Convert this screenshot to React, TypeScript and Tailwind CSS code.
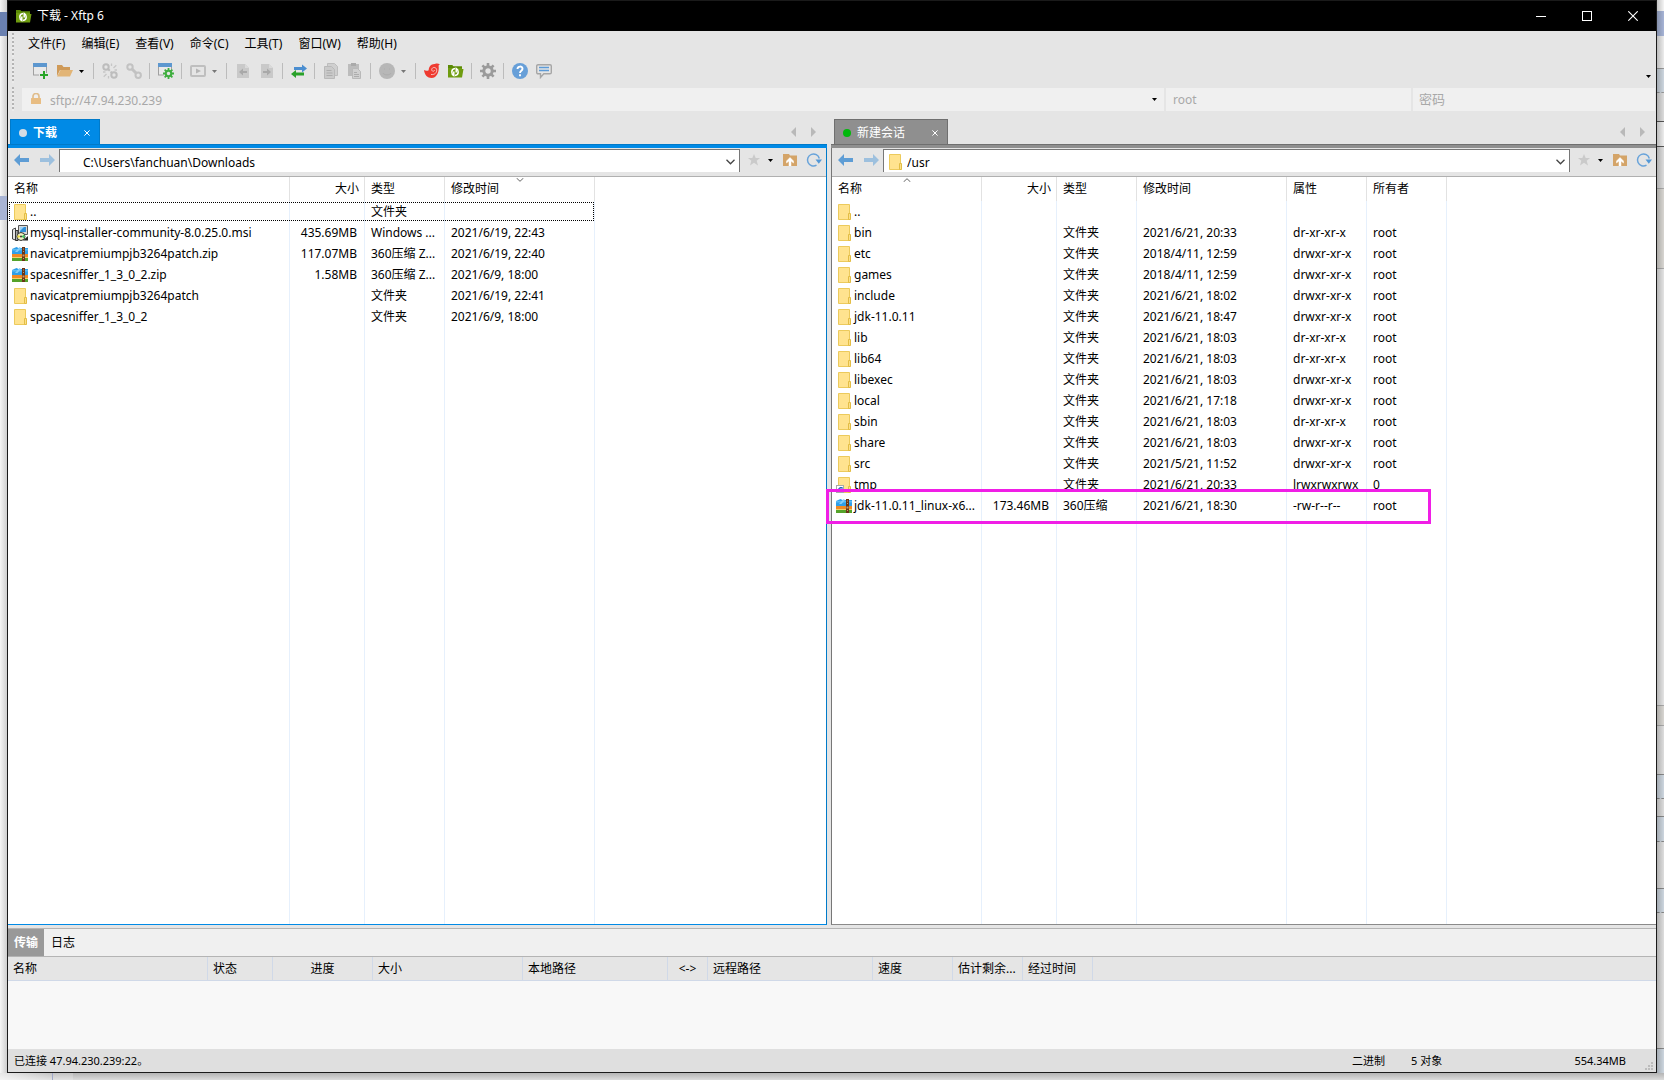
import React from "react";

type IconProps = { className?: string };

const Svg = ({ children, className = "size-4", box = "0 0 16 16" }: { children: React.ReactNode; className?: string; box?: string }) => (
  <svg viewBox={box} className={`block shrink-0 ${className}`} fill="none" aria-hidden="true">
    {children}
  </svg>
);

const XftpIcon = ({ className }: IconProps) => (
  <Svg className={className}>
    <path d="M0 2h4l1.500 1.500H14V6h1.500L14 14.500H0z" fill="#6f9c10" />
    <path d="M0 2h4l1.500 1.500H14V5H0z" fill="#5b8a06" />
    <path d="M7 5.500C4.800 5.700 3.800 7.200 3.800 9c0 1.700.8 2.900 2 3.500V8.500" stroke="#fff" strokeWidth="1.500" />
    <path d="M7 12.500c2.200-.2 3.200-1.700 3.200-3.500 0-1.700-.8-2.900-2-3.500v4" stroke="#fff" strokeWidth="1.500" />
  </Svg>
);

const NewWindowIcon = () => (
  <Svg>
    <rect x="0.500" y="1" width="13" height="11" fill="#e9e9e9" stroke="#a0a0a0" />
    <rect x="0" y="0" width="14" height="4" fill="#5c97cf" />
    <path d="M6 12h9.500M11 7.500v8" stroke="#e5e5e5" strokeWidth="4" />
    <path d="M7 12h8M11 8v8" stroke="#27a527" strokeWidth="2" />
  </Svg>
);
const OpenFolderIcon = () => (
  <Svg>
    <path d="M0 2h5l1.500 2H13v3H3L0 13z" fill="#cf9a58" />
    <path d="M3.500 7H16l-3 6.500H0z" fill="#e2b577" />
  </Svg>
);
const UnlinkIcon = () => (
  <Svg>
    <g stroke="#bdbdbd" strokeWidth="2">
      <circle cx="4" cy="4" r="2.700" />
      <circle cx="12" cy="12" r="2.700" />
      <path d="M6 6l1.800 1.800M10 10L8.600 8.600" />
    </g>
    <path d="M9.500 3V0.500M11.500 5l2.800-2.800M12.500 7H15M3.500 9H1M4.500 11l-2.800 2.800M6.500 13v2.500" stroke="#c6c6c6" strokeWidth="1.300" />
  </Svg>
);
const LinkIcon = () => (
  <Svg>
    <g stroke="#c2c2c2" strokeWidth="2">
      <circle cx="4" cy="4" r="2.700" />
      <circle cx="12.200" cy="12.200" r="2.700" />
      <path d="M5.500 5.500l5 5" strokeWidth="3" />
    </g>
  </Svg>
);
const gearPath = "M8 0v16M0 8h16M2.400 2.400l11.200 11.200M13.600 2.400L2.400 13.600";
const WindowGearIcon = () => (
  <Svg>
    <rect x="0.500" y="1" width="13" height="11" fill="#e9e9e9" stroke="#a0a0a0" />
    <rect x="0" y="0" width="14" height="4" fill="#5c97cf" />
    <circle cx="10.500" cy="10.500" r="5" fill="#e5e5e5" />
    <g transform="translate(5 5) scale(0.69)">
      <path d={gearPath} stroke="#3fae3f" strokeWidth="2.600" />
      <circle cx="8" cy="8" r="4" fill="#e5e5e5" stroke="#3fae3f" strokeWidth="3" />
    </g>
  </Svg>
);
const PlayIcon = () => (
  <Svg>
    <rect x="1" y="3" width="14" height="10" rx="1" stroke="#bfbfbf" strokeWidth="2" />
    <path d="M6 5.500v5L11 8z" fill="#b5b5b5" />
  </Svg>
);
const DocIcon = ({ back }: { back?: boolean }) => (
  <Svg>
    <path d="M2 1h8l4 4v10H2z" fill="#c9c9c9" />
    <path d="M10 1v4h4z" fill="#dadada" />
    <path d={back ? "M4 9l4-3.500v2.500h4v2H8v2.500z" : "M12 9L8 5.500v2.500H4v2h4v2.500z"} fill="#a9a9a9" />
  </Svg>
);
const SwapIcon = () => (
  <Svg>
    <path d="M16 5.500L11 1.500v2.500H3v3h8v2.500z" fill="#4b8ed0" />
    <path d="M0 11l5-4v2.500h8v3H5V15z" fill="#29a129" />
  </Svg>
);
const CopyIcon = () => (
  <Svg>
    <path d="M4.500 0.500h7l3 3v9h-10z" fill="#cfcfcf" stroke="#bdbdbd" />
    <path d="M1.500 3.500h7l3 3v9h-10z" fill="#cacaca" stroke="#b9b9b9" />
    <path d="M3.500 7.500h5M3.500 10h6M3.500 12.500h6" stroke="#adadad" />
  </Svg>
);
const PasteIcon = () => (
  <Svg>
    <path d="M1 1h11v12H1z" fill="#bcbcbc" />
    <path d="M4 0h5v3H4z" fill="#aaa" />
    <path d="M5.500 5.500h5l3 3v7h-8z" fill="#d0d0d0" stroke="#b9b9b9" />
    <path d="M7 9.500h3M7 11.500h5M7 13.500h5" stroke="#adadad" />
  </Svg>
);
const CircleIcon = () => (
  <Svg>
    <circle cx="8" cy="8" r="8" fill="#b7b7b7" />
    <path d="M4 10c1 2.500 7 2.500 8 0M5.500 5.500v1M10.500 5.500v1" stroke="#acacac" />
  </Svg>
);
const XshellIcon = () => (
  <Svg>
    <path d="M0 7c1.500 1 3.200 1 4.700.2C4.800 3.500 7.500.5 11 1c1.200-.6 3.400-.6 5 .4-1 .3-1.400.8-1.400 1.500C15.500 8 13 15 7.500 15 3.500 15 .5 12 0 7z" fill="#ef3a30" />
    <path d="M7 11.500c3.500.6 6-1.800 5.700-4.700-.3-3-4.700-3.200-5-.2-.1 2 2.700 2.300 2.800.4" stroke="#f6cfcc" strokeWidth="0.900" />
  </Svg>
);
const GearIcon = () => (
  <Svg>
    <path d={gearPath} stroke="#9b9b9b" strokeWidth="2.600" />
    <circle cx="8" cy="8" r="4.200" fill="#e5e5e5" stroke="#9b9b9b" strokeWidth="3" />
  </Svg>
);
const HelpIcon = () => (
  <Svg>
    <circle cx="8" cy="8" r="8" fill="#679fd8" />
    <path d="M5.500 6c0-3.200 5-3.200 5-.2C10.500 7.800 8 7.700 8 10M8 11.300v2" stroke="#fff" strokeWidth="1.900" />
  </Svg>
);
const ChatIcon = () => (
  <Svg>
    <path d="M2 1.700h12a1.300 1.300 0 0 1 1.300 1.300v6.500a1.300 1.300 0 0 1-1.300 1.300H7.800L4.500 14.500v-3.700H2A1.300 1.300 0 0 1 .7 9.500V3A1.300 1.300 0 0 1 2 1.700z" stroke="#a6a6a6" strokeWidth="1.400" />
    <path d="M3 4.500h10M3 7.500h10" stroke="#5c9bd8" strokeWidth="1.600" />
  </Svg>
);
const LockIcon = () => (
  <Svg className="h-3 w-[10px]" box="0 0 10 12">
    <path d="M2 6V3.500a3 3 0 0 1 6 0V6" stroke="#e0bd8c" strokeWidth="1.700" />
    <rect y="5" width="10" height="6" rx="0.500" fill="#e8bd83" />
  </Svg>
);
const Caret = ({ className = "text-black" }: IconProps) => (
  <Svg className={`h-[3px] w-[5px] ${className}`} box="0 0 5 3">
    <path d="M0 0h5L2.500 3z" fill="currentColor" />
  </Svg>
);
const Chevron = () => (
  <Svg className="h-[6px] w-[9px]" box="0 0 9 6">
    <path d="M.5.800l4 4 4-4" stroke="#444" strokeWidth="1.300" />
  </Svg>
);
const ArrowIcon = ({ forward }: { forward?: boolean }) => (
  <Svg>
    <path
      d={forward ? "M16 8L10 2v4H1v4h9v4z" : "M0 8l6-6v4h9v4H6v4z"}
      fill={forward ? "#9dc0de" : "#5e9dd5"}
    />
  </Svg>
);
const StarIcon = () => (
  <Svg className="size-3" box="0 0 12 12">
    <path d="M6 0l1.700 4H12L8.700 6.800 10 11.500 6 8.800 2 11.500l1.300-4.700L0 4h4.300z" fill="#cacaca" />
  </Svg>
);
const UpFolderIcon = () => (
  <Svg className="h-3 w-[14px]" box="0 0 14 12">
    <path d="M0 0h6l1 1.500h7V12H0z" fill="#d4a468" />
    <path d="M7 3.500L3.500 7v2L6 7v5h2V7l2.500 2V7z" fill="#fff" stroke="#fff" strokeWidth="0.500" />
  </Svg>
);
const RefreshIcon = () => (
  <Svg>
    <path d="M10.500 13.200A6 6 0 1 1 13.300 6.500" stroke="#68a3da" strokeWidth="1.500" />
    <path d="M9.500 7.500H16l-3.200 4.300z" fill="#5498d6" />
  </Svg>
);
const Triangle = ({ right }: { right?: boolean }) => (
  <Svg className="h-[10px] w-[5px]" box="0 0 5 10">
    <path d={right ? "M0 0v10l5-5z" : "M5 0v10L0 5z"} fill="#b9b9b9" />
  </Svg>
);

const FolderIcon = ({ link }: { link?: boolean }) => (
  <Svg>
    <path d="M2.500.5h11v9.500l.5 5.500H2.500z" fill="#ffe38f" stroke="#ecca5c" />
    <path d="M12.500 9.500h2v6h-2z" fill="#fbe08a" stroke="#e3bd45" />
    {link && (
      <>
        <rect x="0.500" y="8.500" width="7" height="7" fill="#fff" stroke="#a9a9a9" />
        <path d="M2 14c0-2 1-3 3-3M3.500 10.500H6V13" stroke="#2767b8" strokeWidth="1.200" />
      </>
    )}
  </Svg>
);
const ZipIcon = () => (
  <Svg>
    <path d="M0 3l4.500-2 2 1H16v6H0z" fill="#2f9fe9" />
    <path d="M0 3h16v1.500H0z" fill="#5cbcf5" />
    <path d="M3 6L7.500 1 9 2 5.500 6z" fill="#86cffa" />
    <path d="M0 8h16v3.500H0z" fill="#f08a24" />
    <path d="M0 11h16v1H0z" fill="#f6cf6a" />
    <path d="M0 12h16v3H0z" fill="#55a32b" />
    <path d="M10 1h3v14h-3z" fill="#6a3516" />
    <path d="M11 2.500h1v1h-1zM11 5h1v1h-1zM10.500 8.500h2v2h-2zM11 12h1v1h-1z" fill="#c79a6b" />
  </Svg>
);
const MsiIcon = () => (
  <Svg>
    <path d="M6.500.5h9v9h-9z" fill="#d8d8d8" stroke="#555" />
    <path d="M8 2h6v5H8z" fill="#2e8ed8" />
    <path d="M8 2h4L8 6z" fill="#9bd2f7" />
    <path d="M.5 4.500l3-1.500v12l-3-1z" fill="#e4e4e4" stroke="#444" />
    <path d="M3.500 5.500h2.500v10H3.500z" fill="#aaa" stroke="#333" />
    <circle cx="9" cy="11.500" r="4" fill="#f1f1c4" stroke="#333" />
    <path d="M9 11.500l3.500-2v4z" fill="#3fc15c" />
    <path d="M9 11.500L5.500 10v3z" fill="#e9d93d" />
    <circle cx="9" cy="11.500" r="1" fill="#333" />
    <path d="M11 15.500h5V11z" fill="#222" />
  </Svg>
);

type Kind = "folder" | "link" | "zip" | "msi";
type Row = { kind: Kind; cells: string[]; focused?: boolean; marked?: boolean };

const FileIcon = ({ kind }: { kind: Kind }) => {
  if (kind === "zip") return <ZipIcon />;
  if (kind === "msi") return <MsiIcon />;
  return <FolderIcon link={kind === "link"} />;
};

const localRows: Row[] = [
  { kind: "folder", cells: ["..", "", "文件夹", ""], focused: true },
  { kind: "msi", cells: ["mysql-installer-community-8.0.25.0.msi", "435.69MB", "Windows ...", "2021/6/19, 22:43"] },
  { kind: "zip", cells: ["navicatpremiumpjb3264patch.zip", "117.07MB", "360压缩 Z...", "2021/6/19, 22:40"] },
  { kind: "zip", cells: ["spacesniffer_1_3_0_2.zip", "1.58MB", "360压缩 Z...", "2021/6/9, 18:00"] },
  { kind: "folder", cells: ["navicatpremiumpjb3264patch", "", "文件夹", "2021/6/19, 22:41"] },
  { kind: "folder", cells: ["spacesniffer_1_3_0_2", "", "文件夹", "2021/6/9, 18:00"] },
];

const dir = (name: string, time: string, mode: string): Row => ({ kind: "folder", cells: [name, "", "文件夹", time, mode, "root"] });

const remoteRows: Row[] = [
  { kind: "folder", cells: ["..", "", "", "", "", ""] },
  dir("bin", "2021/6/21, 20:33", "dr-xr-xr-x"),
  dir("etc", "2018/4/11, 12:59", "drwxr-xr-x"),
  dir("games", "2018/4/11, 12:59", "drwxr-xr-x"),
  dir("include", "2021/6/21, 18:02", "drwxr-xr-x"),
  dir("jdk-11.0.11", "2021/6/21, 18:47", "drwxr-xr-x"),
  dir("lib", "2021/6/21, 18:03", "dr-xr-xr-x"),
  dir("lib64", "2021/6/21, 18:03", "dr-xr-xr-x"),
  dir("libexec", "2021/6/21, 18:03", "drwxr-xr-x"),
  dir("local", "2021/6/21, 17:18", "drwxr-xr-x"),
  dir("sbin", "2021/6/21, 18:03", "dr-xr-xr-x"),
  dir("share", "2021/6/21, 18:03", "drwxr-xr-x"),
  dir("src", "2021/5/21, 11:52", "drwxr-xr-x"),
  { kind: "link", cells: ["tmp", "", "文件夹", "2021/6/21, 20:33", "lrwxrwxrwx", "0"] },
  { kind: "zip", cells: ["jdk-11.0.11_linux-x6...", "173.46MB", "360压缩", "2021/6/21, 18:30", "-rw-r--r--", "root"], marked: true },
];

type Column = { label: string; width: string; sort?: "asc" | "desc" };

const localColumns: Column[] = [
  { label: "名称", width: "w-[282px]" },
  { label: "大小", width: "w-[75px]" },
  { label: "类型", width: "w-[80px]" },
  { label: "修改时间", width: "w-[150px]", sort: "desc" },
];
const remoteColumns: Column[] = [
  { label: "名称", width: "w-[150px]", sort: "asc" },
  { label: "大小", width: "w-[75px]" },
  { label: "类型", width: "w-[80px]" },
  { label: "修改时间", width: "w-[150px]" },
  { label: "属性", width: "w-[80px]" },
  { label: "所有者", width: "w-[80px]" },
];

const FileTable = ({ columns, rows, label }: { columns: Column[]; rows: Row[]; label: string }) => (
  <table aria-label={label} className="h-full w-full table-fixed border-separate border-spacing-0 bg-white">
    <colgroup>
      {columns.map((c) => (
        <col key={c.label} className={c.width} />
      ))}
      <col />
    </colgroup>
    <thead>
      <tr className="h-6">
        {columns.map((c, i) => (
          <th
            key={c.label}
            scope="col"
            className={`relative border-r border-[#e2e2e2] p-0 font-normal ${i === 1 ? "pr-[5px] text-right" : "pl-[6px] text-left"}`}
          >
            {c.label}
            {c.sort && (
              <svg viewBox="0 0 8 4" fill="none" aria-hidden="true" className="absolute top-px left-1/2 h-1 w-2 -translate-x-1/2">
                <path d={c.sort === "asc" ? "M.5 4L4 .7 7.500 4" : "M.5 0L4 3.300 7.500 0"} stroke="#666" />
              </svg>
            )}
          </th>
        ))}
        <td className="p-0" />
      </tr>
    </thead>
    <tbody>
      {rows.map((row) => (
        <tr key={row.cells[0]} className="relative h-[21px]">
          {row.cells.map((text, i) => (
            <td
              key={columns[i].label}
              className={`border-r border-[#e6f0fc] p-0 whitespace-nowrap ${i === 1 ? "pr-[7px] text-right" : i === 0 ? "pl-1" : "pl-[6px]"}`}
            >
              {i === 0 ? (
                <span className="flex items-center gap-0.5">
                  <FileIcon kind={row.kind} />
                  {text}
                </span>
              ) : (
                text
              )}
              {i === 0 && row.focused && <span className="absolute top-px left-px h-[19px] w-[585px] border border-dotted border-black" />}
              {i === 0 && row.marked && (
                <span className="absolute -top-[6px] -left-[6px] h-[35px] w-[605px] border-[3px] border-[#f01ee6]" />
              )}
            </td>
          ))}
          <td className="p-0" />
        </tr>
      ))}
      <tr>
        {columns.map((c) => (
          <td key={c.label} className="border-r border-[#e6f0fc] p-0" />
        ))}
        <td className="p-0" />
      </tr>
    </tbody>
  </table>
);

type PaneProps = {
  active?: boolean;
  title: string;
  path: string;
  columns: Column[];
  rows: Row[];
};

const Pane = ({ active, title, path, columns, rows }: PaneProps) => (
  <section className="flex min-w-0 flex-col">
    <div className={`flex h-8 items-end justify-between ${active ? "pl-0.5" : "pl-[3px]"}`}>
      <div
        className={`flex h-[25px] items-center border border-b-0 pt-0.5 pr-[9px] pl-2 text-white ${
          active ? "w-[90px] border-[#007ac9] bg-[#008ae6]" : "w-[114px] border-[#6f6f6f] bg-[#8f8f8f]"
        }`}
      >
        <span className={`mr-[6px] size-2 rounded-full ${active ? "bg-[#d4dce4]" : "bg-[#00b80c]"}`} />
        <button type="button" className={`flex-1 text-left ${active ? "font-bold" : ""}`}>
          {title}
        </button>
        <button type="button" aria-label="关闭标签">
          <Svg className="size-[6px]" box="0 0 6 6">
            <path d="M.4.4l5.200 5.200M5.600.4L.4 5.600" stroke="#fff" />
          </Svg>
        </button>
      </div>
      <div className="mr-[11px] flex h-6 items-center gap-[15px]">
        <button type="button" aria-label="上一个标签"><Triangle /></button>
        <button type="button" aria-label="下一个标签"><Triangle right /></button>
      </div>
    </div>
    <div className={`h-1 border-t ${active ? "border-[#007ac9] bg-[#008ae6]" : "border-[#6f6f6f] bg-[#8f8f8f]"}`} />
    <div
      className={`flex min-h-0 flex-1 flex-col border-b ${
        active ? "border-r border-r-[#007ac9] border-b-[#008ae6]" : "border-l border-l-[#777] border-b-[#8a8a8a]"
      }`}
    >
      <div className="flex h-[29px] shrink-0 items-center border-b border-[#b0b0b0] pr-1 pb-1 pl-[6px]">
        <button type="button" aria-label="后退"><ArrowIcon /></button>
        <button type="button" aria-label="前进" className="ml-[9px]"><ArrowIcon forward /></button>
        <div className="mt-px ml-1 flex h-[23px] min-w-0 flex-1 items-center border border-b-0 border-[#777] bg-white pt-0.5 pr-1 pl-[3px]">
          <span className="w-5 shrink-0">{!active && <FolderIcon />}</span>
          <input aria-label="路径" defaultValue={path} className="min-w-0 flex-1 bg-transparent pt-0.5 outline-none" />
          <button type="button" aria-label="路径列表"><Chevron /></button>
        </div>
        <button type="button" aria-label="收藏夹" className="ml-2 flex items-center gap-2">
          <StarIcon />
          <Caret />
        </button>
        <button type="button" aria-label="上级目录" className="ml-[10px]"><UpFolderIcon /></button>
        <button type="button" aria-label="刷新" className="ml-[9px]"><RefreshIcon /></button>
      </div>
      <div className="min-h-0 flex-1">
        <FileTable columns={columns} rows={rows} label={title} />
      </div>
    </div>
  </section>
);

const menus = ["文件(F)", "编辑(E)", "查看(V)", "命令(C)", "工具(T)", "窗口(W)", "帮助(H)"];

const tools: { name: string; icon?: React.ReactNode; caret?: string; sep?: boolean }[] = [
  { name: "新建", icon: <NewWindowIcon /> },
  { name: "打开", icon: <OpenFolderIcon />, caret: "text-black" },
  { name: "s1", sep: true },
  { name: "断开", icon: <UnlinkIcon /> },
  { name: "重新连接", icon: <LinkIcon /> },
  { name: "s2", sep: true },
  { name: "属性", icon: <WindowGearIcon /> },
  { name: "s3", sep: true },
  { name: "执行", icon: <PlayIcon />, caret: "text-[#777]" },
  { name: "s4", sep: true },
  { name: "传输到左边", icon: <DocIcon back /> },
  { name: "传输到右边", icon: <DocIcon /> },
  { name: "s5", sep: true },
  { name: "同步", icon: <SwapIcon /> },
  { name: "s6", sep: true },
  { name: "复制", icon: <CopyIcon /> },
  { name: "粘贴", icon: <PasteIcon /> },
  { name: "s7", sep: true },
  { name: "编码", icon: <CircleIcon />, caret: "text-[#777]" },
  { name: "s8", sep: true },
  { name: "Xshell", icon: <XshellIcon /> },
  { name: "Xftp", icon: <XftpIcon /> },
  { name: "s9", sep: true },
  { name: "选项", icon: <GearIcon /> },
  { name: "s10", sep: true },
  { name: "帮助", icon: <HelpIcon /> },
  { name: "反馈", icon: <ChatIcon /> },
];

const transferColumns = [
  { label: "名称", width: "w-[200px]" },
  { label: "状态", width: "w-[65px]" },
  { label: "进度", width: "w-[100px]" },
  { label: "大小", width: "w-[150px]" },
  { label: "本地路径", width: "w-[145px]" },
  { label: "<->", width: "w-[40px]" },
  { label: "远程路径", width: "w-[165px]" },
  { label: "速度", width: "w-[80px]" },
  { label: "估计剩余...", width: "w-[70px]" },
  { label: "经过时间", width: "w-[70px]" },
];

const Grip = ({ className }: { className: string }) => (
  <span className={`w-0.5 bg-[repeating-linear-gradient(#b4b4b4_0_2px,#ececec_2px_4px)] ${className}`} />
);

/* Slices of the document that stays visible behind the window's right edge. */
const backdropSlices = [
  "h-[11px] bg-[#f4f4f4]",
  "h-[25px] bg-[#a6b4d6]",
  "h-[33px] border-b border-[#999] bg-[#ececec]",
  "h-[24px] border-b border-dashed border-[#999] bg-[#cdd6df]",
  "h-[29px] border-b border-[#555] bg-[#dcdcdc]",
  "h-[25px] border-b border-[#555] bg-[#ececec]",
  "h-[42px] border-b border-[#aaa] bg-[#dcdcdc]",
  "h-[80px] border-b border-[#aaa] bg-[#d8d6d2]",
  "h-[437px] border-b border-[#aaa] bg-[#e4e4e4]",
  "h-[20px] border-b border-[#aaa] bg-[#d8d6d2]",
  "h-[49px] border-b border-[#888] bg-[#dedede]",
  "h-[24px] border-b border-dashed border-[#888] bg-[#cdd6df]",
  "h-[18px] border-b border-[#888] bg-[#dcdcdc]",
  "h-[25px] border-b border-dashed border-[#888] bg-[#cdd6df]",
  "h-[47px] border-b border-[#888] bg-[#dedede]",
  "h-[24px] border-b border-dashed border-[#888] bg-[#cdd6df]",
  "h-[136px] border-b border-[#888] bg-[#dedede]",
  "h-[24px] bg-[#cdd6df]",
];

export default function App() {
  return (
    <div className="grid h-screen w-full grid-cols-[7px_1fr_7px] grid-rows-[1fr_7px] overflow-hidden bg-[#d4d4d4] font-['Noto_Sans','Noto_Sans_CJK_SC',sans-serif] text-[12px] leading-4 text-black">
      <div className="flex flex-col bg-linear-to-r from-[#f6f6f6] to-[#cfcfcf]">
        <div className="mt-3 h-6 bg-[#6a80b0]" />
        <div className="mt-[160px] h-6 bg-[#a8b4d4]" />
      </div>

      <main className="flex min-w-0 flex-col border border-[#1a1a1a] bg-[#e5e5e5]">
        <header className="flex h-[30px] shrink-0 items-center bg-black text-white">
          <XftpIcon className="ml-2 size-4" />
          <h1 className="ml-[5px] flex-1">下载 - Xftp 6</h1>
          <button type="button" aria-label="最小化" className="flex h-full w-[46px] items-center justify-center">
            <span className="h-px w-[10px] bg-white" />
          </button>
          <button type="button" aria-label="最大化" className="flex h-full w-[46px] items-center justify-center">
            <span className="size-[10px] border border-white" />
          </button>
          <button type="button" aria-label="关闭" className="flex h-full w-[46px] items-center justify-center">
            <Svg className="size-[10px]" box="0 0 10 10">
              <path d="M.3.3l9.400 9.400M9.700.3L.3 9.700" stroke="#fff" strokeWidth="1.100" />
            </Svg>
          </button>
        </header>

        <nav aria-label="菜单" className="flex h-[26px] shrink-0 items-center pl-1">
          <Grip className="mt-0.5 h-6" />
          <div className="ml-[6px] flex">
            {menus.map((m) => (
              <button key={m} type="button" className="px-2">
                {m}
              </button>
            ))}
          </div>
        </nav>

        <div role="toolbar" aria-label="工具栏" className="flex h-[29px] shrink-0 items-center pb-px pl-1">
          <Grip className="mr-[19px] h-6" />
          {tools.map((t) =>
            t.sep ? (
              <span key={t.name} className="mr-2 -ml-px h-4 w-px bg-[#bcbcbc]" />
            ) : (
              <button key={t.name} type="button" aria-label={t.name} className={`flex items-center ${t.caret ? "mr-[10px] gap-[6px]" : "mr-2"}`}>
                {t.icon}
                {t.caret && <Caret className={t.caret} />}
              </button>
            ),
          )}
          <button type="button" aria-label="更多" className="mt-[10px] mr-[5px] ml-auto">
            <Caret />
          </button>
        </div>

        <div className="flex h-[26px] shrink-0 items-center pr-px pl-1 text-[#a8a8a8]">
          <Grip className="h-6" />
          <div className="ml-2 flex h-[23px] min-w-0 flex-1 items-center bg-[#f0f0f0] pl-[9px]">
            <LockIcon />
            <input aria-label="地址" defaultValue="sftp://47.94.230.239" className="ml-[9px] min-w-0 flex-1 bg-transparent pt-1 outline-none" />
            <button type="button" aria-label="地址列表" className="mr-[7px]">
              <Caret />
            </button>
          </div>
          <input aria-label="用户名" placeholder="root" className="ml-0.5 h-[23px] w-[245px] bg-[#f0f0f0] px-[7px] outline-none placeholder:text-[#a8a8a8]" />
          <input aria-label="密码" placeholder="密码" type="password" className="ml-0.5 h-[23px] w-[242px] bg-[#f0f0f0] px-[6px] text-[13px] outline-none placeholder:text-[#a8a8a8]" />
        </div>

        <div className="grid min-h-0 flex-1 grid-cols-[819fr_825fr] gap-1">
          <Pane active title="下载" path="C:\Users\fanchuan\Downloads" columns={localColumns} rows={localRows} />
          <Pane title="新建会话" path="/usr" columns={remoteColumns} rows={remoteRows} />
        </div>

        <section className="mt-[3px] shrink-0 border-t border-[#b4b4b4]">
          <div className="flex h-7 items-stretch border-b border-[#b4b4b4] bg-[#f0f0f0]">
            <button type="button" className="bg-[#999] px-[6px] font-bold text-white">传输</button>
            <button type="button" className="px-[7px]">日志</button>
          </div>
          <div className="h-[92px] bg-[#f8f8f8]">
            <table aria-label="传输" className="w-full table-fixed border-separate border-spacing-0 bg-[#e5e5e5]">
              <colgroup>
                {transferColumns.map((c) => (
                  <col key={c.label} className={c.width} />
                ))}
                <col />
              </colgroup>
              <thead>
                <tr className="h-6">
                  {transferColumns.map((c) => (
                    <th
                      key={c.label}
                      scope="col"
                      className={`border-r border-b border-[#d0d9e8] p-0 font-normal whitespace-nowrap ${
                        c.label === "进度" || c.label === "<->" ? "text-center" : "pl-[5px] text-left"
                      }`}
                    >
                      {c.label}
                    </th>
                  ))}
                  <td className="border-b border-[#d0d9e8] p-0" />
                </tr>
              </thead>
            </table>
          </div>
        </section>

        <footer className="flex h-[23px] shrink-0 items-center bg-[#dfdfdf] pl-[6px] text-[11px]">
          <span className="flex-1">已连接 47.94.230.239:22。</span>
          <span className="w-[59px]">二进制</span>
          <span className="w-[100px]">5 对象</span>
          <span className="w-[115px] text-right">554.34MB</span>
          <Svg className="mr-[3px] mb-0.5 ml-[19px] size-2 self-end" box="0 0 8 8">
            <path d="M6 0h2v2H6zM3 3h2v2H3zM6 3h2v2H6zM0 6h2v2H0zM3 6h2v2H3zM6 6h2v2H6z" fill="#bcbcbc" />
          </Svg>
        </footer>
      </main>

      <div className="relative flex flex-col">
        {backdropSlices.map((s, i) => (
          <div key={i} className={`shrink-0 ${s}`} />
        ))}
        <div className="absolute inset-0 bg-linear-to-r from-black/20 to-transparent" />
      </div>

      <div className="col-span-3 flex bg-linear-to-b from-[#b4b4b4] to-[#dcdcdc]">
        <div className="w-[53px] border-r border-[#a0a8c8] bg-linear-to-r from-white/70 to-white/20" />
        <div className="w-5 bg-white/20" />
      </div>
    </div>
  );
}
